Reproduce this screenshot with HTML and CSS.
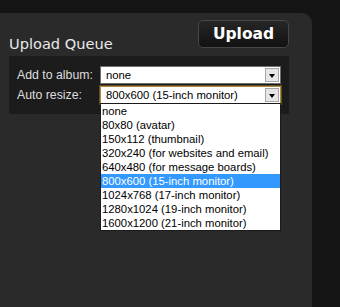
FILE: index.html
```html
<!DOCTYPE html>
<html lang="en">
<head>
    <meta charset="UTF-8">
    <meta name="viewport" content="width=device-width, initial-scale=1.0">
    <title>Upload Queue</title>
    <link rel="stylesheet" href="styles.css">
</head>
<body>

<div class="panel">
    <div class="panel-head">
        <h2 class="queue-title">Upload Queue</h2>
        <button class="upload-button">Upload</button>
    </div>

    <div class="options">
        <div class="option-row">
            <label class="option-label">Add to album:</label>
            <div class="select">
                <span class="select-value">none</span>
                <span class="select-arrow"></span>
            </div>
        </div>
        <div class="option-row">
            <label class="option-label">Auto resize:</label>
            <div class="select focused">
                <span class="select-value">800x600 (15-inch monitor)</span>
                <span class="select-arrow"></span>
                <ul class="dropdown">
                    <li>none</li>
                    <li>80x80 (avatar)</li>
                    <li>150x112 (thumbnail)</li>
                    <li>320x240 (for websites and email)</li>
                    <li>640x480 (for message boards)</li>
                    <li class="selected">800x600 (15-inch monitor)</li>
                    <li>1024x768 (17-inch monitor)</li>
                    <li>1280x1024 (19-inch monitor)</li>
                    <li>1600x1200 (21-inch monitor)</li>
                </ul>
            </div>
        </div>
    </div>
</div>

</body>
</html>
```

FILE: styles.css
```css
* {
    box-sizing: border-box;
    margin: 0;
    padding: 0;
}

html, body {
    height: 100%;
    overflow: hidden;
}

body {
    background: #141414;
    font-family: 'Liberation Sans', Arial, sans-serif;
}

.panel {
    width: 312px;
    height: 294px;
    margin-top: 13px;
    padding: 7px 23px 0 9px;
    background: #2a2a2a;
    border-top-right-radius: 10px;
}

.panel-head {
    display: flex;
    justify-content: space-between;
    align-items: flex-start;
}

.queue-title {
    margin-top: 16px;
    font-family: 'DejaVu Sans', Verdana, sans-serif;
    font-size: 14.6px;
    font-weight: normal;
    line-height: 15px;
    color: #e8e8e8;
}

.upload-button {
    width: 91px;
    height: 28px;
    font-family: 'DejaVu Sans', Verdana, sans-serif;
    font-size: 15.5px;
    font-weight: bold;
    color: #fff;
    background: linear-gradient(#262626, #121212);
    border: 1px solid #474747;
    border-radius: 5px;
    cursor: pointer;
}

.options {
    display: flex;
    flex-direction: column;
    gap: 2px;
    margin-top: 5px;
    padding: 10px 8px 10px 8px;
    background: #1c1c1c;
}

.option-row {
    display: flex;
    align-items: center;
}

.option-label {
    width: 83px;
    font-size: 12.3px;
    color: #dcdcdc;
}

.select {
    position: relative;
    display: flex;
    align-items: center;
    width: 181px;
    height: 18px;
    background: #fff;
    border: 1px solid #6f6f6f;
    font-size: 11.3px;
    color: #000;
}

.select.focused {
    border-color: #b08a3e;
    box-shadow: 0 0 0 1px rgba(176, 138, 62, 0.45);
}

.select-value {
    flex: 1;
    padding-left: 5px;
    white-space: nowrap;
}

.select-arrow {
    display: flex;
    justify-content: center;
    align-items: center;
    width: 14px;
    height: 14px;
    margin-right: 1px;
    background: #e6e6e6;
    border: 1px solid #a8a8a8;
}

.select-arrow::after {
    content: '';
    border-left: 3.5px solid transparent;
    border-right: 3.5px solid transparent;
    border-top: 4px solid #000;
    margin-top: 1px;
}

.dropdown {
    position: absolute;
    top: 100%;
    left: -1px;
    width: 181px;
    list-style: none;
    background: #fff;
    border: 1px solid #1a1a1a;
}

.dropdown li {
    height: 14px;
    line-height: 14px;
    padding-left: 1px;
    white-space: nowrap;
}

.dropdown li.selected {
    background: #3399ff;
    color: #fff;
}
```
